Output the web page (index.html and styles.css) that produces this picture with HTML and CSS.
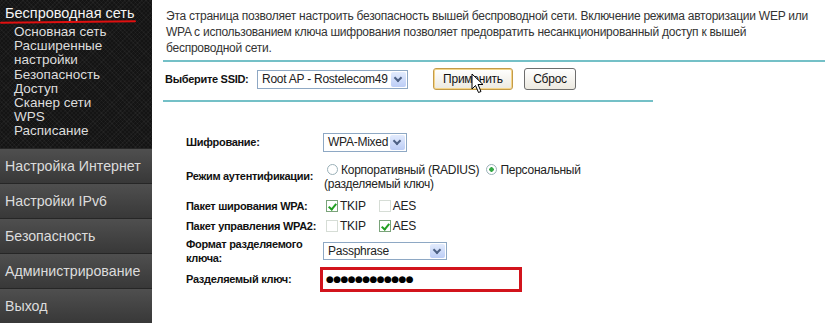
FILE: index.html
```html
<!DOCTYPE html>
<html lang="ru">
<head>
  <meta charset="UTF-8" />
  <title>Безопасность беспроводной сети</title>
  <link rel="stylesheet" href="styles.css">
</head>
<body>
  <aside class="sidebar">
    <div class="submenu">
      <div class="submenu-title"><span class="marked">Беспроводная сеть</span></div>
      <ul class="submenu-list">
        <li>Основная сеть</li>
        <li>Расширенные<br>настройки</li>
        <li>Безопасность</li>
        <li>Доступ</li>
        <li>Сканер сети</li>
        <li>WPS</li>
        <li>Расписание</li>
      </ul>
    </div>
    <div class="menu-item">Настройка Интернет</div>
    <div class="menu-item">Настройки IPv6</div>
    <div class="menu-item">Безопасность</div>
    <div class="menu-item">Администрирование</div>
    <div class="menu-item">Выход</div>
  </aside>

  <main class="content">
    <p class="intro">Эта страница позволяет настроить безопасность вышей беспроводной сети. Включение режима авторизации WEP или WPA с использованием ключа шифрования позволяет предовратить несанкционированный доступ к вышей беспроводной сети.</p>
    <div class="rule"></div>

    <div class="ssid-row">
      <span class="label ssid-label">Выберите SSID:</span>
      <span class="select ssid-select"><span class="select-text">Root AP - Rostelecom49</span><span class="select-arrow"></span></span>
      <span class="btn btn-focus">Применить
        <!-- mouse pointer over the button -->
        <svg class="cursor" width="13" height="21" viewBox="0 0 13 21">
          <path d="M1 1 L1 16 L4.5 12.5 L7.5 19.5 L10 18.5 L7 11.5 L12 11.5 Z" fill="#fff" stroke="#000" stroke-width="1" stroke-linejoin="round"/>
        </svg>
      </span>
      <span class="btn btn-reset">Сброс</span>
    </div>
    <div class="rule rule-short"></div>

    <div class="form">
      <div class="label">Шифрование:</div>
      <div class="field"><span class="select enc-select"><span class="select-text">WPA-Mixed</span><span class="select-arrow"></span></span></div>

      <div class="label">Режим аутентификации:</div>
      <div class="field radios">
        <div><span class="radio"></span>Корпоративный (RADIUS) <span class="radio checked"></span>Персональный</div>
        <div class="radio-note">(разделяемый ключ)</div>
      </div>

      <div class="label">Пакет ширования WPA:</div>
      <div class="field checks"><span class="cb checked"></span>TKIP <span class="cb"></span>AES</div>

      <div class="label">Пакет управления WPA2:</div>
      <div class="field checks"><span class="cb"></span>TKIP <span class="cb checked"></span>AES</div>

      <div class="label">Формат разделяемого<br>ключа:</div>
      <div class="field"><span class="select fmt-select"><span class="select-text">Passphrase</span><span class="select-arrow"></span></span></div>

      <div class="label">Разделяемый ключ:</div>
      <div class="field"><span class="key-input">●●●●●●●●●●●●</span></div>
    </div>
  </main>
</body>
</html>
```

FILE: styles.css
```css
/* ── base ───────────────────────────────────────────── */
html, body { margin: 0; height: 100%; }
body {
  display: flex;
  background: #fff;
  font-family: "Liberation Sans", Arial, sans-serif;
  color: #222;
  overflow: hidden;
}

/* ── left menu ──────────────────────────────────────── */
.sidebar {
  width: 152px;
  flex: none;
  background: #3a3a3a;
}
.submenu {
  height: 148px;
  box-sizing: border-box;
  padding-top: 4px;
  background-color: #141414;
  background-image:
    repeating-linear-gradient(45deg, rgba(255,255,255,.035) 0 1px, transparent 1px 3px),
    repeating-linear-gradient(-45deg, rgba(255,255,255,.035) 0 1px, transparent 1px 3px);
  color: #ddd;
}
.submenu-title {
  font-size: 14.5px;
  line-height: 18px;
  padding-left: 5px;
  color: #f4f4f4;
}
.marked { position: relative; }
.marked::after {
  content: "";
  position: absolute;
  left: -5px;
  right: -1px;
  bottom: -2px;
  height: 2px;
  background: #e01010;
  border-radius: 1px;
  transform: rotate(-0.6deg);
}
.submenu-list {
  list-style: none;
  margin: 3px 0 0;
  padding: 0 0 0 14px;
  font-size: 13.5px;
  line-height: 14.2px;
}
.menu-item {
  height: 35px;
  box-sizing: border-box;
  padding-left: 5px;
  line-height: 34px;
  font-size: 14.2px;
  color: #dcdcdc;
  background: linear-gradient(#4f4f4f, #383838);
  border-top: 1px solid #262626;
}

/* ── content ────────────────────────────────────────── */
.content {
  flex: 1;
  padding-left: 11px;
  font-size: 12px;
  letter-spacing: -0.25px;
}
.intro {
  width: 652px;
  margin: 0;
  padding: 8px 0 0 3px;
  line-height: 16px;
  color: #333;
}
.rule {
  width: 662px;
  height: 2px;
  margin-top: 4px;
  background: #74c0c7;
}
.rule-short { width: 490px; margin-top: 0; }

.label {
  font-size: 11px;
  font-weight: bold;
  letter-spacing: -0.3px;
  color: #111;
}
.ssid-row {
  display: flex;
  align-items: center;
  padding: 6px 0 10px 2px;
}
.ssid-label { width: 92px; }

.select {
  display: inline-flex;
  box-sizing: border-box;
  height: 19px;
  border: 1px solid #8ea8c4;
  background: #fff;
  color: #222;
  font-size: 12px;
}
.select-text {
  flex: 1;
  padding-left: 4px;
  line-height: 17px;
  white-space: nowrap;
}
.select-arrow {
  width: 15px;
  margin: 1px;
  border-radius: 2px;
  background: linear-gradient(#e2ebfd, #bccdf6);
  position: relative;
}
.select-arrow::after {
  content: "";
  position: absolute;
  left: 4px;
  top: 3px;
  width: 4px;
  height: 4px;
  border-right: 2px solid #4d6185;
  border-bottom: 2px solid #4d6185;
  transform: rotate(45deg);
}
.ssid-select { width: 151px; }
.enc-select { width: 84px; }
.fmt-select { width: 124px; height: 18px; }

.btn {
  position: relative;
  box-sizing: border-box;
  height: 22px;
  line-height: 20px;
  text-align: center;
  font-size: 12px;
  color: #111;
  border-radius: 3px;
  background: linear-gradient(#ffffff, #ece9e0);
}
.btn-focus {
  width: 80px;
  margin-left: 25px;
  border: 1px solid #c49b48;
  box-shadow: inset 0 0 0 1px #f4d58a;
}
.btn-reset {
  width: 52px;
  margin-left: 11px;
  border: 1px solid #6d6d6d;
}
.cursor {
  position: absolute;
  left: 37px;
  top: 4px;
}

/* ── security form ──────────────────────────────────── */
.form {
  display: grid;
  grid-template-columns: 137px auto;
  grid-template-rows: 26px 42px 18px 21px 29px 28px;
  align-items: center;
  margin-top: 27px;
  padding-left: 23px;
}
.form .label { line-height: 14px; }
.field { font-size: 12px; color: #222; }

.radios { line-height: 14px; padding-top: 2px; }
.radio-note { padding-left: 1px; }
.radio {
  display: inline-block;
  box-sizing: border-box;
  width: 11px;
  height: 11px;
  margin: 0 3px 0 4px;
  border: 1px solid #9ab0b8;
  border-radius: 50%;
  vertical-align: -1px;
  background: #fff;
}
.radio.checked {
  background: radial-gradient(circle, #35a845 0 2px, #fff 2.5px);
  margin-left: 4px;
}

.checks { display: flex; align-items: center; }
.cb {
  display: inline-block;
  box-sizing: border-box;
  width: 12px;
  height: 12px;
  margin: 0 2px 0 3px;
  border: 1px solid #d6ddd6;
  background: #fff;
}
.cb.checked {
  border-color: #7aa37a;
  position: relative;
}
.cb.checked::after {
  content: "";
  position: absolute;
  left: 3px;
  top: 1px;
  width: 3px;
  height: 6px;
  border-right: 2px solid #22a022;
  border-bottom: 2px solid #22a022;
  transform: rotate(40deg);
}
.checks .cb:nth-of-type(2) { margin-left: 13px; }

.key-input {
  display: block;
  box-sizing: border-box;
  width: 202px;
  height: 25px;
  margin-left: -3px;
  padding-left: 3px;
  border: 3px solid #d2141c;
  font-family: "DejaVu Sans", sans-serif;
  font-size: 9px;
  line-height: 19px;
  letter-spacing: -0.6px;
  color: #000;
}
```
